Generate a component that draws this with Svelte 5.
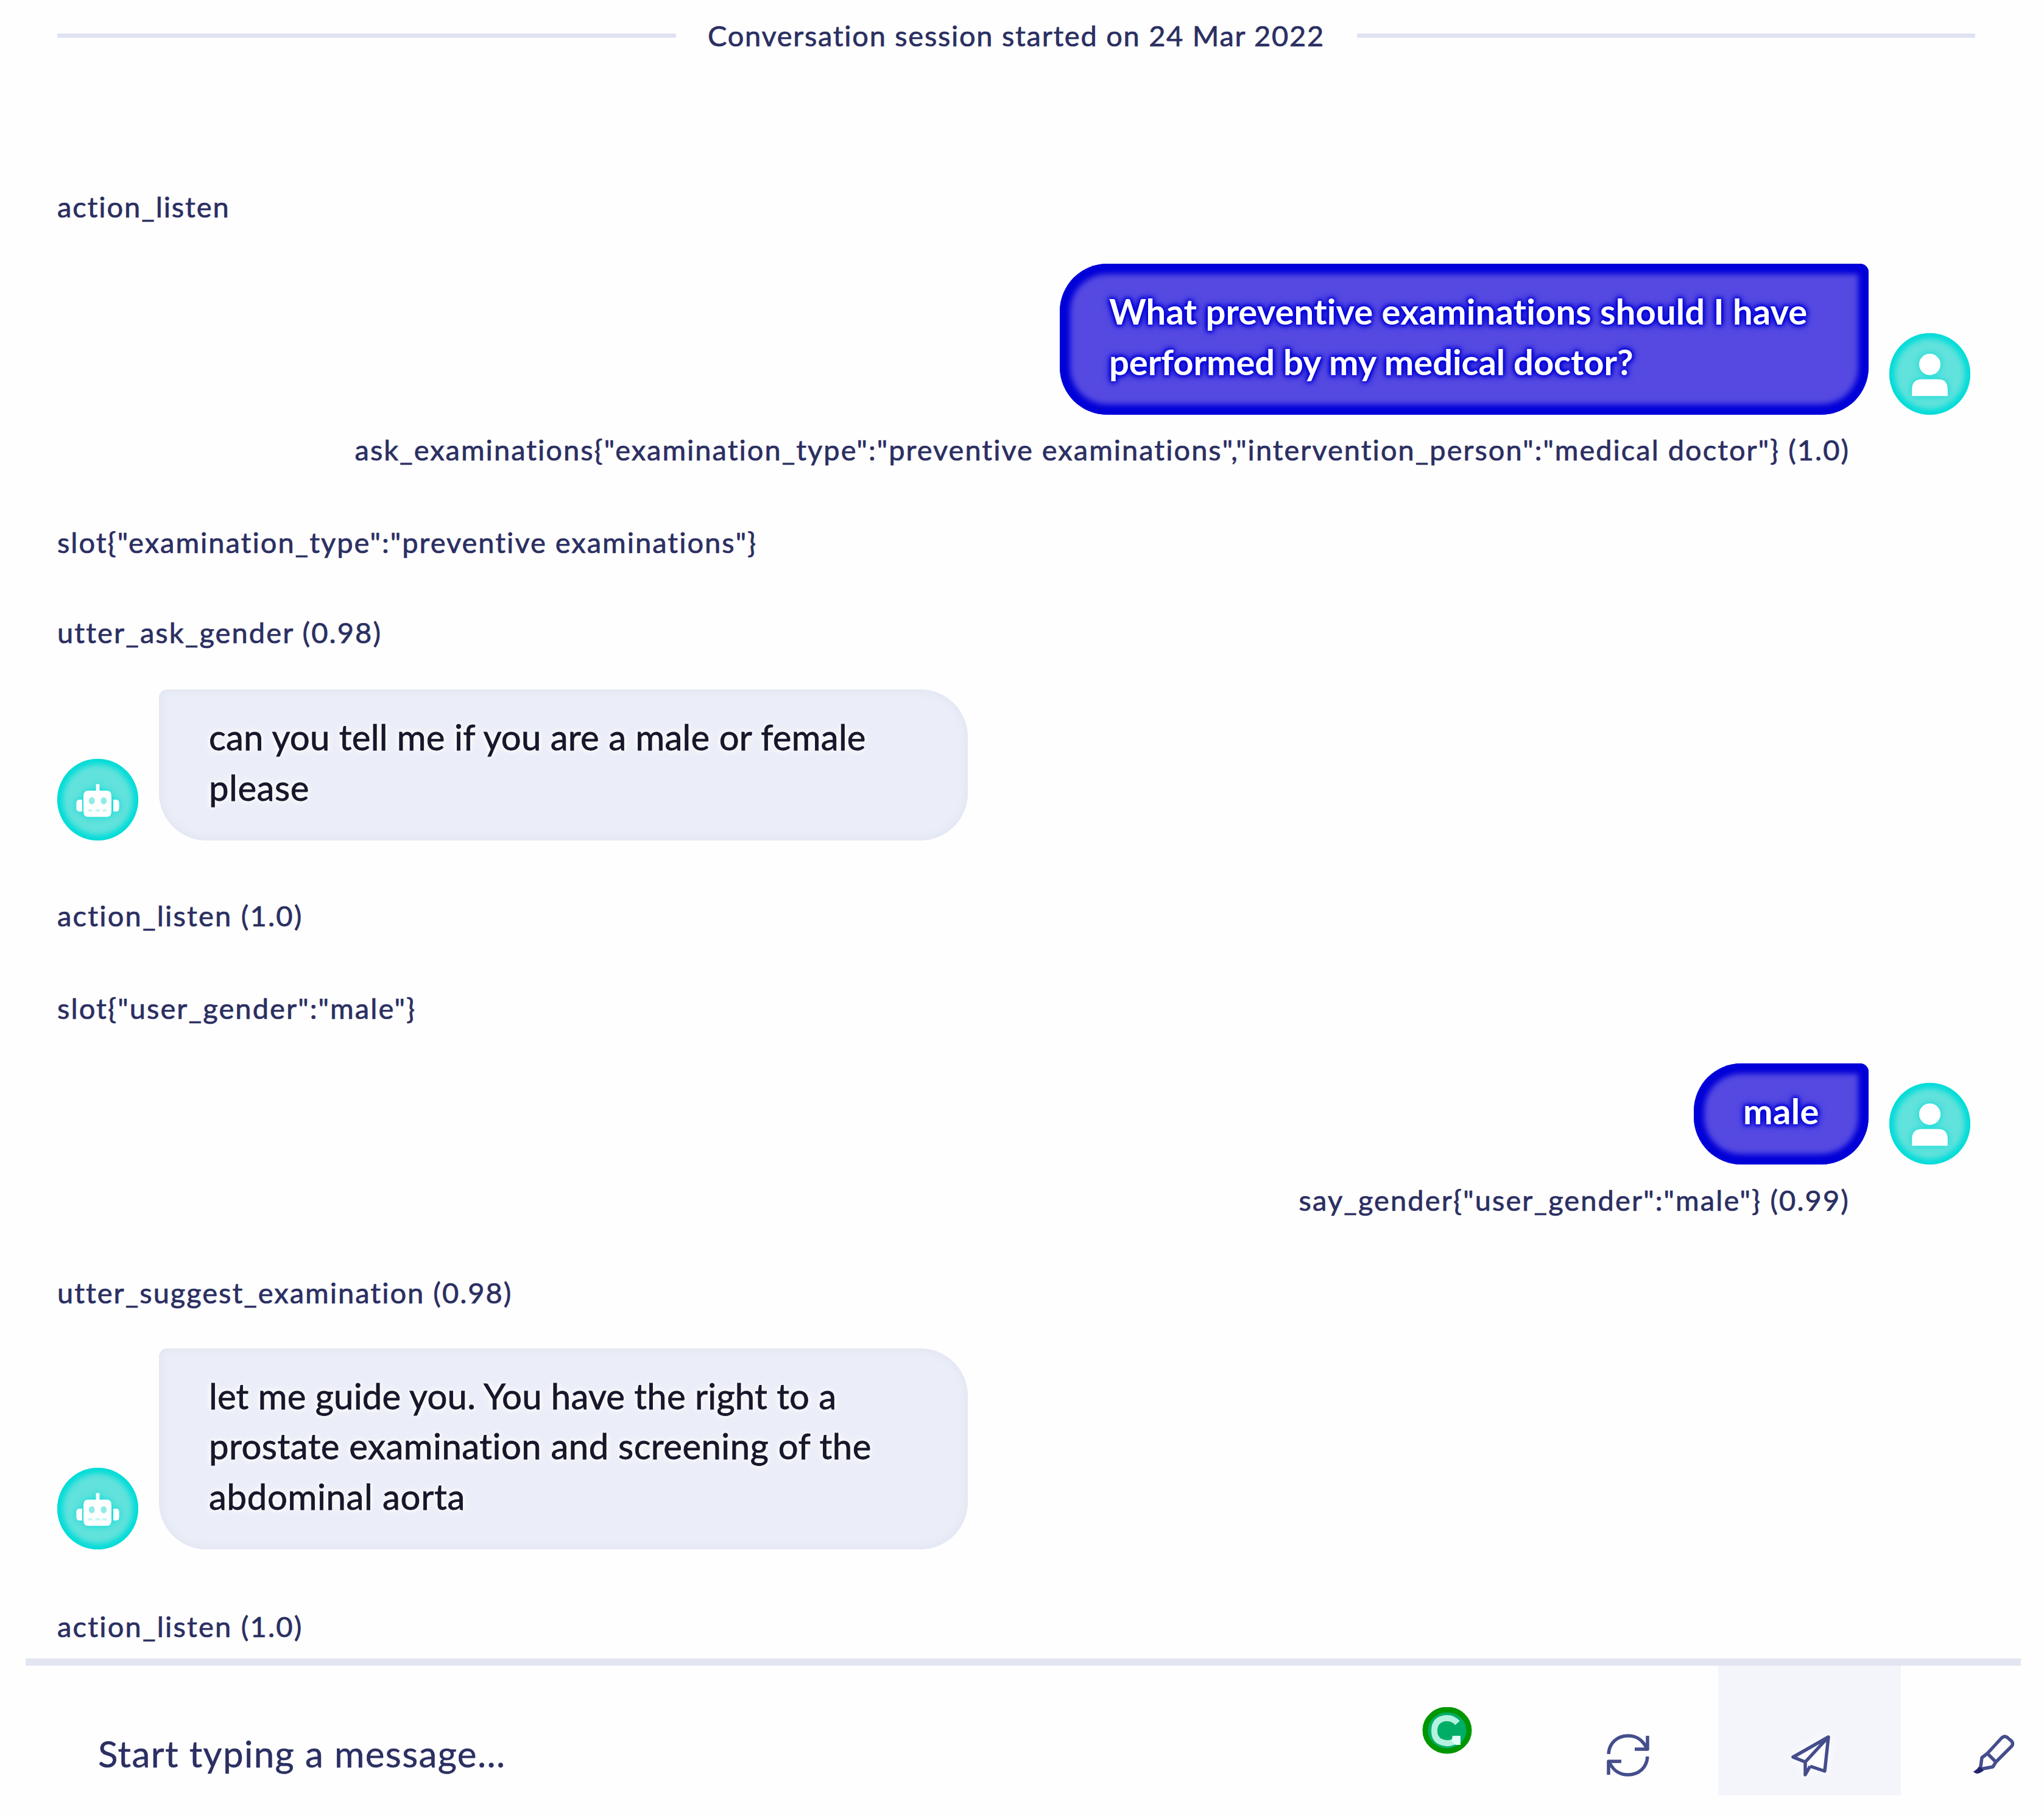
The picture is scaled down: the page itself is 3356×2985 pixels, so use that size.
<script>
  const events = [
    { type: 'log', text: 'action_listen', gap: 221, tracking: 1.9 },
    { type: 'user', lines: ['What preventive examinations should I have', 'performed by my medical doctor?'], tracking: [0.1, -0.1], gap: 64 },
    { type: 'intent', text: 'ask_examinations{"examination_type":"preventive examinations","intervention_person":"medical doctor"} (1.0)', gap: 27, tracking: 2 },
    { type: 'log', text: 'slot{"examination_type":"preventive examinations"}', gap: 92, tracking: 2 },
    { type: 'log', text: 'utter_ask_gender (0.98)', gap: 88, tracking: 2.1 },
    { type: 'bot', lines: ['can you tell me if you are a male or female', 'please'], tracking: [0.3, 0.6], gap: 64 },
    { type: 'log', text: 'action_listen (1.0)', gap: 93, tracking: 2.2 },
    { type: 'log', text: 'slot{"user_gender":"male"}', gap: 92, tracking: 2.1 },
    { type: 'user', lines: ['male'], tracking: [0.4], gap: 61 },
    { type: 'intent', text: 'say_gender{"user_gender":"male"} (0.99)', gap: 28, tracking: 2.1 },
    { type: 'log', text: 'utter_suggest_examination (0.98)', gap: 92, tracking: 2 },
    { type: 'bot', lines: ['let me guide you. You have the right to a', 'prostate examination and screening of the', 'abdominal aorta'], tracking: [0.25, 0.5, 0.7], gap: 62 },
    { type: 'log', text: 'action_listen (1.0)', gap: 96, tracking: 2.2 },
  ];
</script>

{#snippet avatar(type)}
  <div class="avatar">
    {#if type === 'user'}
      <svg viewBox="0 0 136 136">
        <circle cx="68" cy="52" r="18" />
        <path d="M38 105V94Q38 77 55 77H82Q98 77 98 94V105Z" />
      </svg>
    {:else}
      <svg viewBox="0 0 136 136">
        <path d="M65 42h6v11h12q8 0 8 9v26q0 9-8 9H52q-8 0-8-9V62q0-9 8-9h13Z" />
        <path d="M42 68v20h-4q-6 0-6-6v-8q0-6 6-6Z M94 68v20h4q6 0 6-6v-8q0-6-6-6Z" />
        <g class="face">
          <ellipse cx="58" cy="70" rx="5" ry="6" />
          <ellipse cx="78" cy="70" rx="5" ry="6" />
          <path class="mouth" d="M52 84h7v4h-7zM64 84h8v4h-8zM76 84h7v4h-7z" />
        </g>
      </svg>
    {/if}
  </div>
{/snippet}

<div class="page">
  <div class="conversation">
    <div class="session">
      <span class="rule"></span>
      <span class="session-text">Conversation session started on 24 Mar 2022</span>
      <span class="rule"></span>
    </div>

    {#each events as event}
      {#if event.lines}
        <div class="message {event.type}" style:margin-top="{event.gap}px">
          {#if event.type === 'bot'}{@render avatar('bot')}{/if}
          <div class="bubble" class:wide={event.lines.length > 1}>
            {#each event.lines as line, i}
              <div class="line"><span style:letter-spacing="{event.tracking[i]}px">{line}</span></div>
            {/each}
          </div>
          {#if event.type === 'user'}{@render avatar('user')}{/if}
        </div>
      {:else}
        <div class="label {event.type}" style:margin-top="{event.gap}px">
          <span style:letter-spacing="{event.tracking}px">{event.text}</span>
        </div>
      {/if}
    {/each}
  </div>

  <div class="composer">
    <div class="placeholder">Start typing a message...</div>
    <svg class="grammar" viewBox="0 0 82 78">
      <ellipse cx="41" cy="38" rx="36" ry="34" />
      <path d="M58 26Q50 17 39 18Q20 20 20 39Q20 57 39 59Q49 60 56 54" />
      <path class="foot" d="M50 47h13v15h-8l-7-6Z" />
    </svg>
    <div class="action">
      <svg viewBox="0 0 70 70">
        <path d="M3 33C4 15 17 3 35 3C49 3 58 9 65 22M67 3V25H46M67 37C66 55 53 67 35 67C21 67 12 61 5 48M3 67V45H24" />
      </svg>
    </div>
    <div class="action send">
      <svg viewBox="0 0 70 70">
        <path d="M64 5L6 38L26 46L64 5ZM64 5L58 61L34 53M26 46V67L34 53" />
      </svg>
    </div>
    <div class="action last">
      <svg viewBox="0 0 70 70">
        <path d="M48 7Q53 2 58 6L65 12Q68 16 65 20L39 46L25 32ZM25 32L16 39L14 54L8 62L18 57L34 54L39 46" />
        <path class="tip" d="M13 54L2 62Q8 69 19 60Z" />
      </svg>
    </div>
  </div>
</div>

<style>
  :global(body) {
    margin: 0;
    background: #fefefe;
  }

  .page {
    width: 3356px;
    height: 2985px;
    display: flex;
    flex-direction: column;
    overflow: hidden;
    background: #fefefe;
    color: #2b2f62;
    font-family: Lato, "Open Sans", sans-serif;
    font-variant-ligatures: none;
  }

  .conversation {
    height: 2723px;
    box-sizing: border-box;
    padding: 28px 113px 0 94px;
  }

  .session {
    display: flex;
    align-items: center;
    height: 60px;
  }

  .rule {
    flex: 1;
    height: 7px;
    background: #dfe3f1;
    border-radius: 1px;
  }

  .session-text {
    width: 1118px;
    text-align: center;
    font-size: 47px;
    line-height: 56px;
    letter-spacing: 1.7px;
    white-space: nowrap;
    -webkit-text-stroke: 0.7px #2b2f62;
  }

  .label {
    height: 60px;
    font-size: 47px;
    line-height: 60px;
    white-space: nowrap;
    -webkit-text-stroke: 0.7px #2b2f62;
  }

  .intent {
    padding-right: 206px;
    text-align: right;
  }

  .message {
    display: flex;
    align-items: flex-end;
    gap: 34px;
  }

  .message.user {
    justify-content: flex-end;
    padding-right: 8px;
  }

  .bubble {
    box-sizing: border-box;
    padding: 37px 81px 46px;
    font-size: 58px;
    line-height: 82.5px;
    white-space: nowrap;
  }

  .wide {
    width: 1328px;
  }

  .user .bubble {
    border-radius: 78px 14px 78px 78px;
    background: #5549e2;
    box-shadow: inset 0 0 10px 17px #0000d8;
    color: #fff;
    font-weight: 700;
    text-shadow: 0 0 7px #0000d8, 0 0 7px #0000d8, 0 0 10px #0000d8, 0 0 14px #0000d8;
  }

  .bot .bubble {
    padding-left: 82px;
    border-radius: 14px 78px 78px 78px;
    background: #ebeef8;
    box-shadow: inset 0 0 14px 4px #e2e6f2;
    color: #17172b;
    text-shadow: 0 0 7px #fff, 0 0 10px #fff, 0 0 16px #fff;
    -webkit-text-stroke: 0.8px #17172b;
  }

  .avatar {
    flex: none;
    width: 133px;
    height: 134px;
    border-radius: 50%;
    background: #62e2dc;
    box-shadow: inset 0 0 10px 9px #00dcd8;
  }

  .avatar svg {
    display: block;
    width: 133px;
    height: 134px;
    fill: #fff;
    filter: drop-shadow(0 0 6px #00dcd8);
  }

  .face {
    fill: #8eebe7;
  }

  .mouth {
    fill: #c5f6f3;
  }

  .composer {
    display: flex;
    box-sizing: border-box;
    width: 3276px;
    height: 225px;
    margin-left: 42px;
    border-top: 12px solid #e3e6f1;
  }

  .placeholder {
    width: 2293px;
    box-sizing: border-box;
    padding: 104px 0 0 119px;
    font-size: 60px;
    line-height: 80px;
    letter-spacing: 1.4px;
    white-space: nowrap;
    -webkit-text-stroke: 0.5px #2b2f62;
  }

  .grammar {
    width: 82px;
    height: 78px;
    margin-top: 68px;
  }

  .grammar ellipse {
    fill: #00ad67;
    stroke: #009600;
    stroke-width: 9;
  }

  .grammar path {
    fill: none;
    stroke: #b4f1df;
    stroke-width: 10;
  }

  .grammar .foot {
    fill: #dffff5;
    stroke: none;
  }

  .action {
    display: flex;
    justify-content: center;
    width: 300px;
    padding: 112px 0 0 4px;
    box-sizing: border-box;
  }

  .grammar + .action {
    margin-left: 104px;
  }

  .send {
    background: #f4f5fb;
  }

  .last {
    width: 197px;
    justify-content: flex-end;
    padding-right: 10px;
  }

  .action svg {
    width: 70px;
    height: 70px;
    fill: none;
    stroke: #454e8c;
    stroke-width: 5.5;
    stroke-linejoin: round;
    overflow: visible;
  }

  .send svg {
    fill: #fff;
    filter: drop-shadow(0 0 8px #fff);
  }

  .action .tip {
    fill: #20246f;
    stroke: none;
  }
</style>
